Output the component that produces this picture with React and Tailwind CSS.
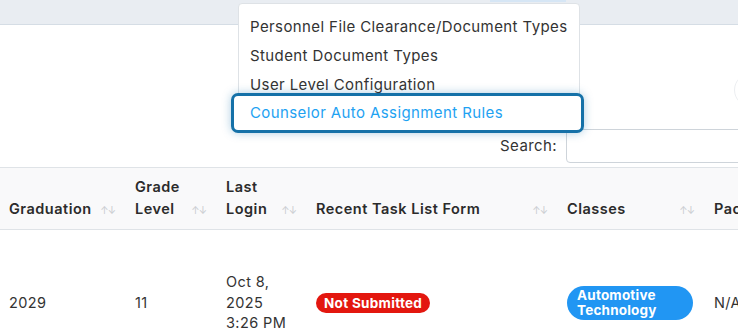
import React from "react";

const font = { fontFamily: "Inter, 'Open Sans', sans-serif" };

const SortIcon = () => (
  <span className="text-[10px] leading-none tracking-[-1px] text-[#c9ccd0] pb-[5px]">↑↓</span>
);

const headers = [
  { label: ["Graduation"] },
  { label: ["Grade", "Level"] },
  { label: ["Last", "Login"] },
  { label: ["Recent Task List Form"] },
  { label: ["Classes"] },
  { label: ["Pac"], noSort: true },
];

const menuItems = [
  "Personnel File Clearance/Document Types",
  "Student Document Types",
  "User Level Configuration",
];

export default function App() {
  return (
    <div className="relative w-[738px] h-[332px] overflow-hidden bg-white text-[#333]" style={font}>
      {/* top bar */}
      <div className="h-[25px] bg-[#e9edf2] border-b border-[#d5dde5] relative">
        <div className="absolute left-[490px] top-0 w-[76px] h-[2px] bg-[#d6e6f5]" />
      </div>

      {/* filter area */}
      <div className="h-[142px] flex flex-col justify-end pb-[4px] relative">
        <div className="absolute right-[-30px] top-[48px] w-[34px] h-[34px] rounded-full border border-[#eceef1]" />
        <div className="flex items-center justify-end gap-[9px]">
          <span className="text-[15px] tracking-[0.4px]">Search:</span>
          <div className="w-[190px] h-[34px] rounded-[4px] border border-[#ced4da] -mr-[18px]" />
        </div>
      </div>

      {/* table header */}
      <div className="grid grid-cols-[126px_91px_90px_251px_147px_1fr] h-[63px] bg-[#f9f9fa] border-y border-[#dfe3e7]">
        {headers.map((h, i) => (
          <div key={i} className="flex items-end justify-between pl-[9px] pr-[11px] pb-[9px]">
            <div className="text-[14.5px] font-semibold leading-[22px] tracking-[0.5px] text-[#2b2b2b]">
              {h.label.map((l) => (
                <div key={l}>{l}</div>
              ))}
            </div>
            {!h.noSort && <SortIcon />}
          </div>
        ))}
      </div>

      {/* row */}
      <div className="grid grid-cols-[126px_91px_90px_251px_147px_1fr] h-[146px] items-center text-[14.5px] tracking-[0.4px]">
        <div className="pl-[9px]">2029</div>
        <div className="pl-[9px]">11</div>
        <div className="pl-[9px] leading-[20.5px]">
          <div>Oct 8,</div>
          <div>2025</div>
          <div>3:26 PM</div>
        </div>
        <div className="pl-[9px]">
          <span className="inline-block bg-[#e3170f] text-white text-[13.5px] font-bold leading-[20px] tracking-[0.3px] px-[8px] rounded-full">
            Not Submitted
          </span>
        </div>
        <div className="pl-[9px]">
          <span className="inline-block w-[126px] bg-[#2196f3] text-white text-[13.5px] font-bold leading-[15px] tracking-[0.2px] pl-[10px] pt-[2px] pb-[2px] rounded-[17px]">
            Automotive
            <br />
            Technology
          </span>
        </div>
        <div className="pl-[9px]">N/A</div>
      </div>

      {/* dropdown menu */}
      <div className="absolute left-[238px] top-[3px] w-[342px] h-[128px] bg-white border border-[#dee2e6] rounded-[4px] pt-[9px]">
        {menuItems.map((m) => (
          <div key={m} className="h-[29px] flex items-center pl-[11px] text-[15px] tracking-[0.4px] whitespace-nowrap">
            {m}
          </div>
        ))}
        <div className="-ml-[8px] -mr-[5px] mt-[-7px] h-[40px] flex items-center pl-[16px] border-[3px] border-[#1571a8] rounded-[7px] bg-white shadow-[0_0_10px_rgba(21,113,168,0.35)] text-[15px] tracking-[0.4px] text-[#1ea2f2] whitespace-nowrap">
          Counselor Auto Assignment Rules
        </div>
      </div>
    </div>
  );
}
